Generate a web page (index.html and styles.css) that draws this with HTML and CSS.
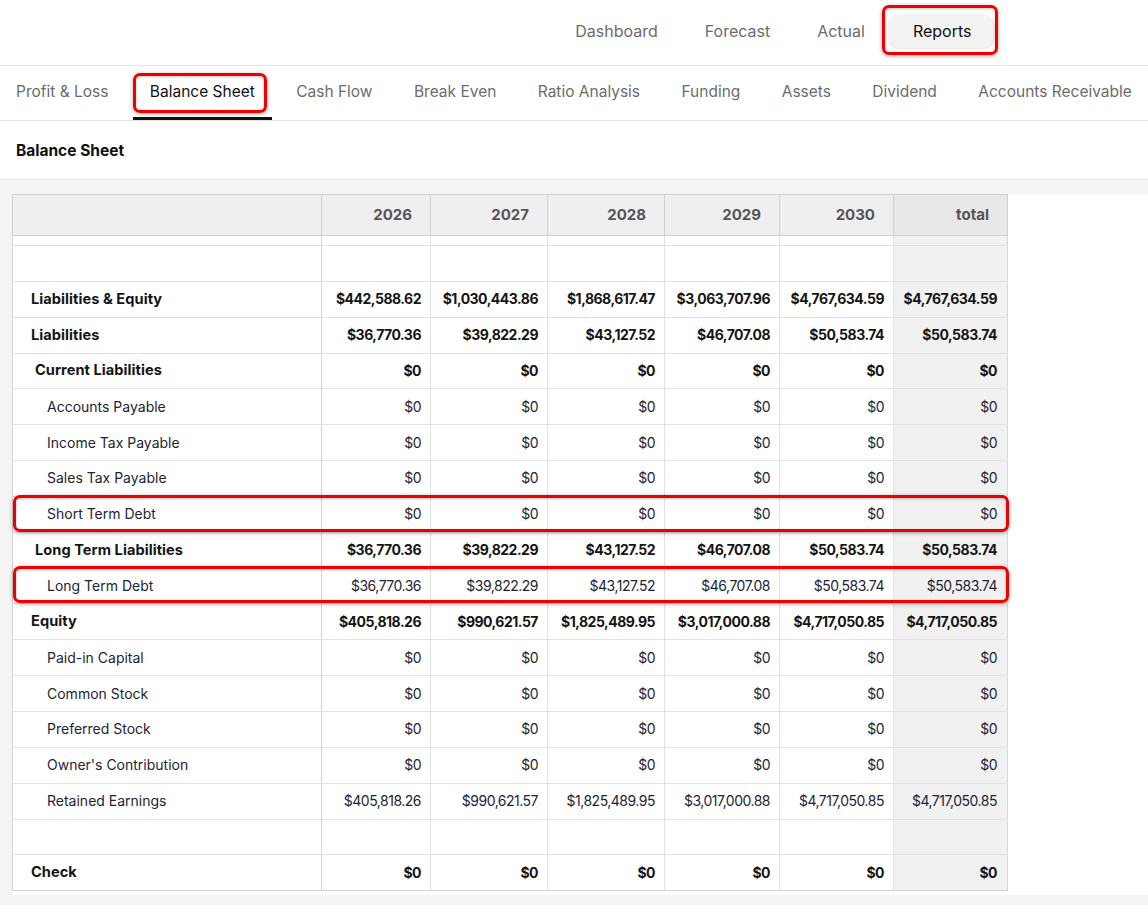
FILE: index.html
```html
<!DOCTYPE html>
<html>
<head>
<meta charset="utf-8">
<title>Balance Sheet</title>
<link rel="stylesheet" href="styles.css">
</head>
<body>
<header class="topnav">
  <nav class="topnav-items">
    <a class="topnav-item">Dashboard</a>
    <a class="topnav-item">Forecast</a>
    <a class="topnav-item">Actual</a>
    <a class="topnav-item active">Reports<span class="mark mark-reports"></span></a>
  </nav>
</header>
<nav class="tabs">
  <a class="tab">Profit &amp; Loss</a>
  <a class="tab active">Balance Sheet<span class="mark mark-tab"></span></a>
  <a class="tab">Cash Flow</a>
  <a class="tab">Break Even</a>
  <a class="tab">Ratio Analysis</a>
  <a class="tab">Funding</a>
  <a class="tab">Assets</a>
  <a class="tab">Dividend</a>
  <a class="tab">Accounts Receivable</a>
</nav>
<div class="title-bar"><h1 class="title">Balance Sheet</h1></div>
<main class="content">
  <div class="sheet">
    <div class="table-wrap">
      <table class="bs">
        <colgroup>
          <col class="c-label"><col class="c-26"><col class="c-27"><col class="c-28"><col class="c-29"><col class="c-30"><col class="c-tot">
        </colgroup>
        <thead>
          <tr><th></th><th>2026</th><th>2027</th><th>2028</th><th>2029</th><th>2030</th><th class="tot">total</th></tr>
        </thead>
        <tbody>
          <tr class="thin"><td></td><td></td><td></td><td></td><td></td><td></td><td class="tot"></td></tr>
          <tr><td></td><td></td><td></td><td></td><td></td><td></td><td class="tot"></td></tr>
          <tr class="b l0"><td>Liabilities &amp; Equity</td><td>$442,588.62</td><td>$1,030,443.86</td><td>$1,868,617.47</td><td>$3,063,707.96</td><td>$4,767,634.59</td><td class="tot">$4,767,634.59</td></tr>
          <tr class="b l0"><td>Liabilities</td><td>$36,770.36</td><td>$39,822.29</td><td>$43,127.52</td><td>$46,707.08</td><td>$50,583.74</td><td class="tot">$50,583.74</td></tr>
          <tr class="b l1"><td>Current Liabilities</td><td>$0</td><td>$0</td><td>$0</td><td>$0</td><td>$0</td><td class="tot">$0</td></tr>
          <tr class="l2"><td>Accounts Payable</td><td>$0</td><td>$0</td><td>$0</td><td>$0</td><td>$0</td><td class="tot">$0</td></tr>
          <tr class="l2"><td>Income Tax Payable</td><td>$0</td><td>$0</td><td>$0</td><td>$0</td><td>$0</td><td class="tot">$0</td></tr>
          <tr class="l2"><td>Sales Tax Payable</td><td>$0</td><td>$0</td><td>$0</td><td>$0</td><td>$0</td><td class="tot">$0</td></tr>
          <tr class="l2"><td>Short Term Debt</td><td>$0</td><td>$0</td><td>$0</td><td>$0</td><td>$0</td><td class="tot">$0</td></tr>
          <tr class="b l1"><td>Long Term Liabilities</td><td>$36,770.36</td><td>$39,822.29</td><td>$43,127.52</td><td>$46,707.08</td><td>$50,583.74</td><td class="tot">$50,583.74</td></tr>
          <tr class="l2"><td>Long Term Debt</td><td>$36,770.36</td><td>$39,822.29</td><td>$43,127.52</td><td>$46,707.08</td><td>$50,583.74</td><td class="tot">$50,583.74</td></tr>
          <tr class="b l0"><td>Equity</td><td>$405,818.26</td><td>$990,621.57</td><td>$1,825,489.95</td><td>$3,017,000.88</td><td>$4,717,050.85</td><td class="tot">$4,717,050.85</td></tr>
          <tr class="l2"><td>Paid-in Capital</td><td>$0</td><td>$0</td><td>$0</td><td>$0</td><td>$0</td><td class="tot">$0</td></tr>
          <tr class="l2"><td>Common Stock</td><td>$0</td><td>$0</td><td>$0</td><td>$0</td><td>$0</td><td class="tot">$0</td></tr>
          <tr class="l2"><td>Preferred Stock</td><td>$0</td><td>$0</td><td>$0</td><td>$0</td><td>$0</td><td class="tot">$0</td></tr>
          <tr class="l2"><td>Owner's Contribution</td><td>$0</td><td>$0</td><td>$0</td><td>$0</td><td>$0</td><td class="tot">$0</td></tr>
          <tr class="l2"><td>Retained Earnings</td><td>$405,818.26</td><td>$990,621.57</td><td>$1,825,489.95</td><td>$3,017,000.88</td><td>$4,717,050.85</td><td class="tot">$4,717,050.85</td></tr>
          <tr><td></td><td></td><td></td><td></td><td></td><td></td><td class="tot"></td></tr>
          <tr class="b l0"><td>Check</td><td>$0</td><td>$0</td><td>$0</td><td>$0</td><td>$0</td><td class="tot">$0</td></tr>
        </tbody>
      </table>
      <span class="mark mark-row mark-std"></span>
      <span class="mark mark-row mark-ltd"></span>
    </div>
  </div>
</main>
</body>
</html>
```

FILE: styles.css
```css
* { box-sizing: border-box; }
html, body { margin: 0; padding: 0; }
body {
  font-family: Inter, "Noto Sans", "Liberation Sans", sans-serif;
  background: #f4f4f4;
  color: #1a1a1a;
  width: 1148px;
  height: 905px;
  overflow: hidden;
}
a { text-decoration: none; cursor: pointer; }

.mark {
  position: absolute;
  border: 3px solid #ee0000;
  border-radius: 7px;
  box-shadow: 0 1px 4px rgba(0,0,0,0.35), inset 0 1px 3px rgba(0,0,0,0.25);
  pointer-events: none;
}

/* top nav */
.topnav {
  height: 66px;
  background: #fff;
  border-bottom: 1px solid #e4e4e4;
  display: flex;
  justify-content: flex-end;
  align-items: center;
  padding: 0 154px 4px 0;
}
.topnav-items { display: flex; align-items: center; }
.topnav-item {
  position: relative;
  font-size: 16px;
  color: #6c6c6c;
  padding: 9px 23.5px;
  line-height: 16px;
  border-radius: 12px;
}
.topnav-item.active {
  color: #111;
  background: #f3f3f3;
  box-shadow: 0 1px 3px rgba(0,0,0,0.12);
  padding: 9px 22.5px 9px 24.5px;
}
.mark-reports { left: -6px; right: -4px; top: -9px; bottom: -7px; }

/* tabs */
.tabs {
  height: 55px;
  background: #fff;
  border-bottom: 1px solid #e4e4e4;
  display: flex;
  align-items: stretch;
  gap: 7.4px;
}
.tab {
  position: relative;
  display: flex;
  align-items: center;
  padding: 0 17px;
  font-size: 15.5px;
  color: #6c6c6c;
  white-space: nowrap;
  border-bottom: 3px solid transparent;
}
.tab:first-child { padding-left: 16px; }
.tab.active { color: #111; border-bottom-color: #111; }
.mark-tab { left: 0; right: 5px; top: 7px; bottom: 4px; }

/* title */
.title-bar {
  height: 59px;
  background: #fff;
  border-bottom: 1px solid #e4e4e4;
  display: flex;
  align-items: center;
  padding-left: 16px;
}
.title { margin: 0; font-size: 15.5px; font-weight: 700; color: #111; }

/* content */
.content { padding: 14px 0 10px 12px; }
.sheet { background: #fff; padding-bottom: 4px; }
.table-wrap { position: relative; width: 995px; }

.bs {
  border-collapse: collapse;
  table-layout: fixed;
  width: 995px;
  font-size: 14px;
}
.c-label { width: 309px; }
.c-26 { width: 109px; }
.c-27 { width: 117px; }
.c-28 { width: 117px; }
.c-29 { width: 115px; }
.c-30 { width: 114px; }
.c-tot { width: 114px; }

.bs th {
  height: 41px;
  background: #efeff1;
  border: 1px solid #d0d0d0;
  text-align: right;
  padding: 0 18px 1px 8px;
  font-size: 15px;
  font-weight: 700;
  color: #555;
}
.bs th.tot { background: #e8e8e8; }
.bs td {
  height: 35.85px;
  border: 1px solid #e2e2e2;
  text-align: right;
  padding: 0 9px 1px 4px;
  color: #1e2433;
  white-space: nowrap;
  letter-spacing: -0.5px;
}
.bs td:first-child {
  text-align: left;
  letter-spacing: 0;
  border-right-color: #d4d4d4;
  border-left-color: #d4d4d4;
}
.bs td.tot { background: #f1f1f1; border-right-color: #d8d8d8; padding-right: 10px; }
.bs tr:last-child td { border-bottom-color: #d4d4d4; }
.bs tr.thin td { height: 10px; }
.bs tr.b td { font-weight: 700; color: #151515; }
.bs tr.b td:first-child { font-size: 14.6px; letter-spacing: 0.05px; }
.bs tr.l0 td:first-child { padding-left: 18px; }
.bs tr.l1 td:first-child { padding-left: 22px; }
.bs tr.l2 td:first-child { padding-left: 34px; font-weight: 400; }

.mark-row { left: 1px; width: 996px; height: 37px; }
.mark-std { top: 301px; }
.mark-ltd { top: 372px; }
```
